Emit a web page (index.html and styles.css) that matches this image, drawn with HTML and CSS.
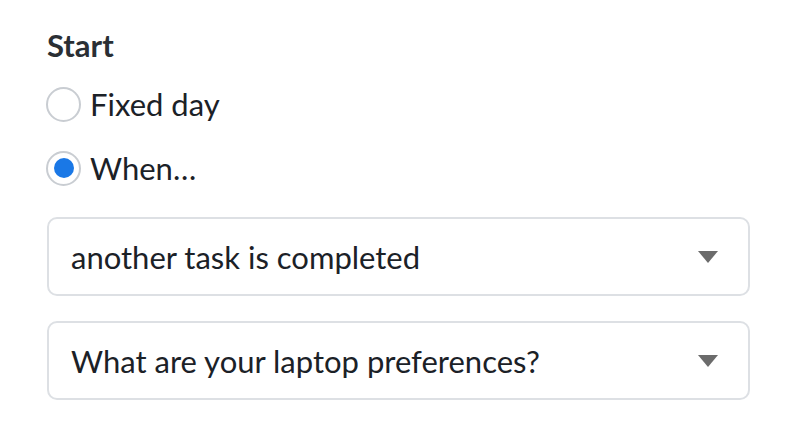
FILE: index.html
```html
<!DOCTYPE html>
<html>
<head>
<meta charset="utf-8">
<link rel="stylesheet" href="styles.css">
</head>
<body>
<div class="panel">
  <div class="title">Start</div>
  <label class="radio">
    <span class="circle"></span>
    <span class="label">Fixed day</span>
  </label>
  <label class="radio">
    <span class="circle checked"><span class="dot"></span></span>
    <span class="label">When…</span>
  </label>
  <div class="select">
    <span class="value">another task is completed</span>
    <span class="caret"></span>
  </div>
  <div class="select">
    <span class="value">What are your laptop preferences?</span>
    <span class="caret"></span>
  </div>
</div>
</body>
</html>
```
FILE: styles.css
```css
html, body {
  margin: 0;
  padding: 0;
  background: #ffffff;
}
body {
  font-family: Lato, "Noto Sans", sans-serif;
  color: #1b2127;
}
.panel {
  width: 703px;
  padding: 25px 0 0 47px;
  display: flex;
  flex-direction: column;
}
.title {
  font-size: 31px;
  font-weight: 700;
  color: #2a2f34;
  line-height: 40px;
  margin-bottom: 21px;
}
.radio {
  display: flex;
  align-items: center;
  gap: 9px;
  height: 36px;
  margin-bottom: 28px;
  margin-left: -1px;
}
.circle {
  box-sizing: border-box;
  width: 35px;
  height: 35px;
  border: 2px solid #c9cdd2;
  border-radius: 50%;
  display: flex;
  align-items: center;
  justify-content: center;
  flex: none;
}
.dot {
  width: 20px;
  height: 20px;
  border-radius: 50%;
  background: #1a78e6;
}
.label {
  font-size: 31px;
  line-height: 36px;
}
.radio + .select {
  margin-top: 3px;
}
.select {
  box-sizing: border-box;
  height: 79px;
  flex: none;
  border: 2px solid #dde0e4;
  border-radius: 10px;
  display: flex;
  align-items: center;
  justify-content: space-between;
  padding: 0 30px 0 22px;
  margin-bottom: 25px;
}
.value {
  font-size: 31px;
  line-height: 36px;
}
.caret {
  width: 0;
  height: 0;
  border-left: 10px solid transparent;
  border-right: 10px solid transparent;
  border-top: 12px solid #6b6b6b;
}
```
